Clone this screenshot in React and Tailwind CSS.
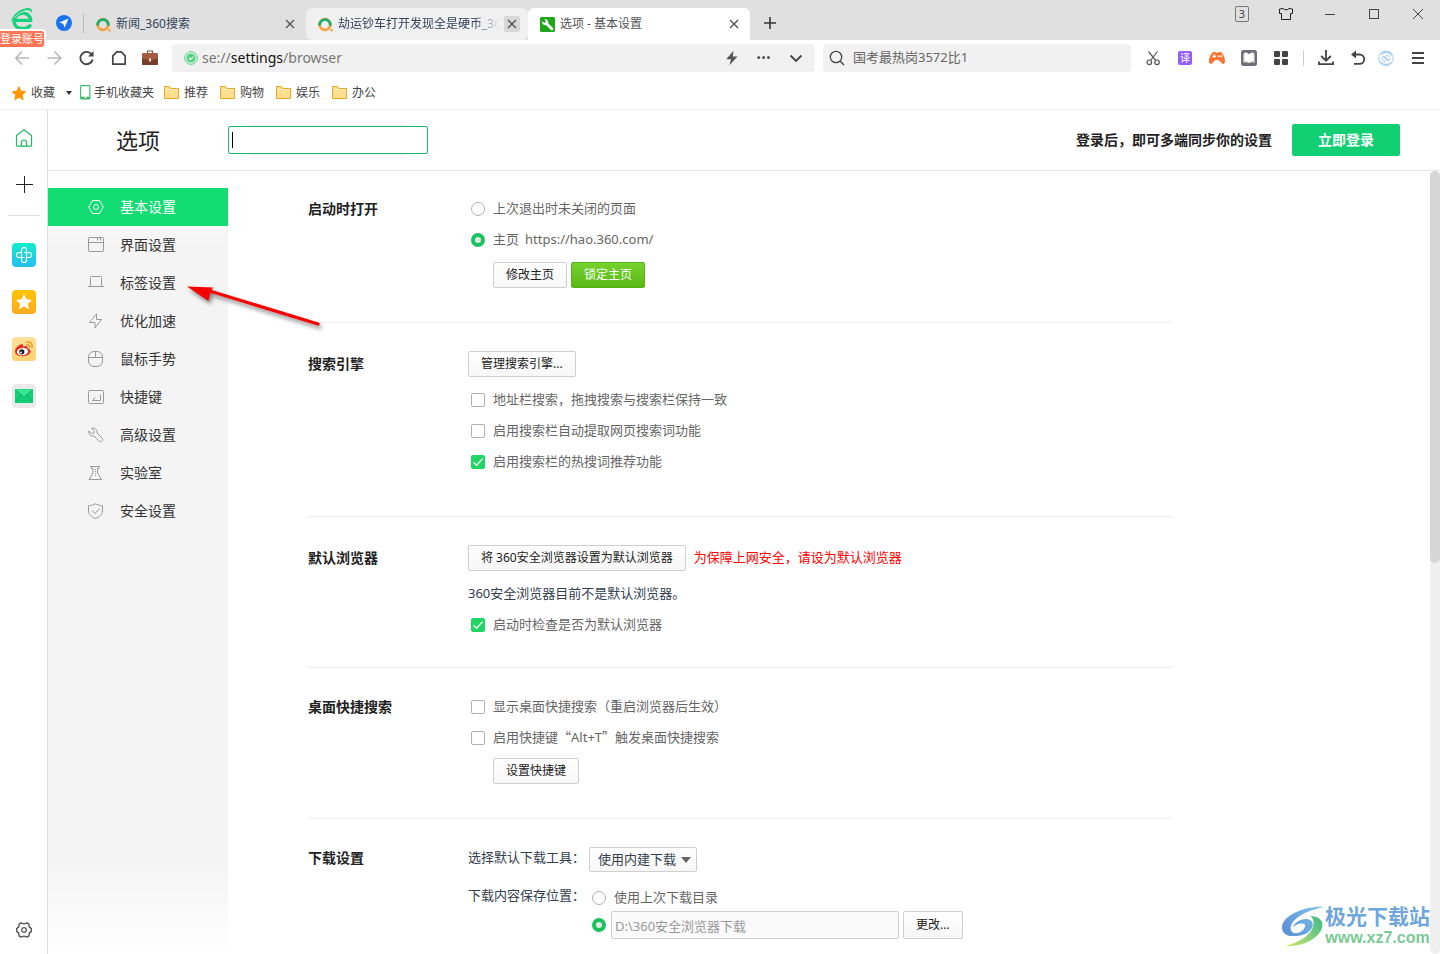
import React from "react";

/* ---------- shared pieces ---------- */

function Svg({ size = 16, label, children, className = "" }) {
  return (
    <svg
      width={size}
      height={size}
      viewBox={`0 0 ${size} ${size}`}
      fill="none"
      stroke="currentColor"
      className={`shrink-0 ${className}`}
      aria-hidden={label ? undefined : true}
      aria-label={label}
    >
      {children}
    </svg>
  );
}

function IconButton({ label, className = "", children }) {
  return (
    <button type="button" aria-label={label} className={`flex shrink-0 items-center justify-center ${className}`}>
      {children}
    </button>
  );
}

function SettingButton({ children, className = "h-[26px]" }) {
  return (
    <button
      type="button"
      className={`shrink-0 whitespace-nowrap rounded-xs border border-[#cfcfcf] bg-linear-to-b from-white to-[#f7f7f7] px-3 text-xs text-[#222] ${className}`}
    >
      {children}
    </button>
  );
}

function Check({ children, checked = false }) {
  return (
    <label className="flex h-[31px] items-center gap-2 pl-[3px] text-[13px] text-[#666]">
      <span className="grid size-3.5 shrink-0 place-items-center">
        <input
          type="checkbox"
          defaultChecked={checked}
          className="peer col-start-1 row-start-1 size-3.5 appearance-none rounded-xs border border-[#b0b0b0] bg-white checked:border-[#1fd665] checked:bg-[#1fd665]"
        />
        <svg
          viewBox="0 0 14 14"
          className="pointer-events-none col-start-1 row-start-1 hidden size-3.5 peer-checked:block"
          fill="none"
          stroke="white"
          strokeWidth="1.3"
          aria-hidden="true"
        >
          <path d="M2.5 7.2 5.6 10.2 11.6 3.6" />
        </svg>
      </span>
      <span>{children}</span>
    </label>
  );
}

function Radio({ name, checked = false, label, children, className = "h-[31px] pl-[3px]" }) {
  return (
    <label className={`flex items-center gap-2 text-[13px] text-[#666] ${className}`}>
      <input
        type="radio"
        name={name}
        defaultChecked={checked}
        aria-label={label}
        className="size-3.5 shrink-0 appearance-none rounded-full border border-[#b0b0b0] bg-white checked:border-4 checked:border-[#1bc25f] checked:bg-[#e4e8e5]"
      />
      {children}
    </label>
  );
}

function Section({ title, headClass, className, children, last = false }) {
  return (
    <section className={`flex ${last ? "" : "border-b border-[#f0f0f0]"} ${className}`}>
      <h2 className={`flex w-40 shrink-0 items-center text-sm font-bold text-[#222] ${headClass}`}>{title}</h2>
      <div className="min-w-0 flex-1">{children}</div>
    </section>
  );
}

/* ---------- browser chrome ---------- */

function BrowserLogo() {
  return (
    <svg width="24" height="24" viewBox="0 0 24 24" fill="none" aria-hidden="true" className="text-[#17d37c]">
      <path d="M5.500 13.400H20.600C20.400 8.800 17.200 6.200 12.800 6.200 7.800 6.200 4.200 9.500 4.200 14.200 4.200 18.800 8 21.600 12.600 21.600 16.400 21.600 19.200 20.300 20.800 17.700" stroke="currentColor" strokeWidth="3.400" />
      <path d="M1.200 15.500C1.700 9 8.500 2.200 16 1.200 20 .7 22.600 2 21.800 5.800 20.800 3 17.800 2.600 14.500 3.700 9 5.700 4.200 10.500 1.200 15.500Z" fill="currentColor" />
      <path d="M4.200 10.800C7.500 7 12 4 17.500 3.400" stroke="#e0e0e0" strokeWidth=".8" />
    </svg>
  );
}

function SearchFavicon() {
  return (
    <Svg size={15}>
      <circle cx="7" cy="7.500" r="5.300" stroke="#f9a03f" strokeWidth="2.800" />
      <path d="M1.700 8.500A5.300 5.300 0 1 1 12.200 8.600" stroke="#1fae6d" strokeWidth="2.800" />
      <circle cx="13.500" cy="13.200" r="1.300" fill="#f9a03f" stroke="none" />
    </Svg>
  );
}

function WrenchFavicon() {
  return (
    <Svg size={15}>
      <rect width="15" height="15" rx="1.500" fill="#1ea51a" stroke="none" />
      <path d="M6.200 6.200 12 12" stroke="white" strokeWidth="2.800" strokeLinecap="round" />
      <path d="M2.200 4.200 4.200 6 6 4.400 4.300 2.300C6.500 1.700 8.700 3.200 8.300 5.600 8 8.200 5 8.900 3.300 7.500 2.300 6.700 1.900 5.400 2.200 4.200Z" fill="white" stroke="none" />
    </Svg>
  );
}

function CloseX() {
  return (
    <Svg size={16}>
      <path d="M4 4 12 12M12 4 4 12" stroke="#555" strokeWidth="1.400" />
    </Svg>
  );
}

function Tab({ icon, title, className = "", titleClass = "text-[#33435a]", closeClass = "" }) {
  return (
    <div className={`flex h-8 w-[222px] min-w-0 items-center gap-[5px] pl-3 pr-2 ${className}`}>
      {icon}
      <span className={`min-w-0 flex-1 overflow-hidden whitespace-nowrap text-xs ${titleClass}`}>{title}</span>
      <IconButton label="关闭标签页" className={`size-4 rounded-xs ${closeClass}`}>
        <CloseX />
      </IconButton>
    </div>
  );
}

function TabBar() {
  return (
    <header className="flex h-10 items-end bg-[#e0e0e0]">
      <div className="relative flex w-[84px] shrink-0 self-start">
        <a href="#account" aria-label="登录账号" className="pl-2.5 pt-[7px]">
          <BrowserLogo />
        </a>
        <span className="absolute left-0 top-[31px] z-10 h-4 whitespace-nowrap rounded-r-xs bg-[#ff7452] text-[11px] leading-4 text-white outline-2 outline-white">
          登录账号
        </span>
        <IconButton label="导航" className="ml-[22px] mt-[15px] size-4">
          <Svg size={16}>
            <circle cx="8" cy="8" r="8" fill="#1a73ee" stroke="none" />
            <path d="M12.500 3.500 3.300 7.600 7.300 8.700 8.500 12.700Z" fill="white" stroke="none" />
          </Svg>
        </IconButton>
        <span className="ml-[11px] mt-[13px] h-5 w-px bg-[#bdbdbd]" />
      </div>
      <nav aria-label="标签页" className="flex min-w-0">
        <Tab icon={<SearchFavicon />} title="新闻_360搜索" />
        <Tab
          icon={<SearchFavicon />}
          title="劫运钞车打开发现全是硬币_36"
          className="rounded-md bg-[#f0f0f0]"
          titleClass="text-[#33435a] mask-r-from-85% mask-r-to-100%"
          closeClass="bg-[#d8d8d8]"
        />
        <Tab icon={<WrenchFavicon />} title="选项 - 基本设置" className="rounded-t-md bg-white" titleClass="text-[#555]" />
      </nav>
      <IconButton label="新建标签页" className="mb-[9px] ml-3 size-4">
        <Svg size={16}>
          <path d="M8 2V14M2 8H14" stroke="#333" strokeWidth="1.600" />
        </Svg>
      </IconButton>
      <div className="ml-auto flex shrink-0 self-start text-[#444]">
        <IconButton label="3 个标签页" className="h-7 w-11">
          <span className="h-4 w-3.5 rounded-xs border border-[#777] text-center text-[11px] leading-3.5">3</span>
        </IconButton>
        <IconButton label="皮肤" className="h-7 w-11">
          <Svg size={14}>
            <path d="M4 1.500C5 3.300 9 3.300 10 1.500L13.500 2V6.500H11.500V12.500H2.500V6.500H.5V2Z" stroke="#222" />
          </Svg>
        </IconButton>
        <IconButton label="最小化" className="h-7 w-11">
          <Svg size={10}>
            <path d="M0 5.500H10" />
          </Svg>
        </IconButton>
        <IconButton label="最大化" className="h-7 w-11">
          <Svg size={10}>
            <rect x=".5" y=".5" width="9" height="9" />
          </Svg>
        </IconButton>
        <IconButton label="关闭" className="h-7 w-11">
          <Svg size={10}>
            <path d="M0 0 10 10M10 0 0 10" />
          </Svg>
        </IconButton>
      </div>
    </header>
  );
}

function Toolbar() {
  return (
    <div className="flex h-9 items-center bg-white pl-1.5 pr-0.5 text-[#555]">
      <IconButton label="后退" className="h-7 w-8">
        <Svg><path d="M8 1.500 1.800 8 8 14.500M2 8H15" stroke="#b8b8b8" strokeWidth="1.600" /></Svg>
      </IconButton>
      <IconButton label="前进" className="h-7 w-8">
        <Svg><path d="M8.500 1.500 14.700 8 8.500 14.500M14.500 8H1.500" stroke="#b8b8b8" strokeWidth="1.600" /></Svg>
      </IconButton>
      <IconButton label="刷新" className="h-7 w-8">
        <Svg>
          <path d="M13.800 4.700A6.200 6.200 0 1 0 14.600 9.500" stroke="#444" strokeWidth="1.900" />
          <path d="M15.500 1V6.500H10Z" fill="#444" stroke="none" />
        </Svg>
      </IconButton>
      <IconButton label="主页" className="h-7 w-8">
        <Svg><path d="M2.800 5.800 6.800 1.800H11.200L15.200 5.800V14.200H2.800Z" stroke="#444" strokeWidth="1.700" strokeLinejoin="round" /></Svg>
      </IconButton>
      <IconButton label="工具箱" className="h-7 w-8">
        <Svg>
          <path d="M5.500 3.500V1H10.500V3.500" stroke="#7d5645" strokeWidth="1.200" />
          <rect x="0" y="3" width="16" height="12" rx="1.200" fill="#a15c42" stroke="none" />
          <path d="M0 8.500 8 10 16 8.500V14A1 1 0 0 1 15 15H1A1 1 0 0 1 0 14Z" fill="#74402d" stroke="none" />
          <rect x="7" y="8.500" width="2" height="3" fill="#f5e3ab" stroke="none" />
        </Svg>
      </IconButton>

      <div className="ml-1.5 flex h-7 min-w-0 flex-1 items-center rounded-sm bg-[#f1f1f1] pl-3 pr-[3px]">
        <Svg size={14} className="text-[#4cd482]">
          <circle cx="7" cy="7" r="6.300" strokeWidth="1" />
          <circle cx="7" cy="7" r="4.600" fill="currentColor" stroke="none" />
          <path d="M4.800 7 6.500 8.700 9.400 5.600" stroke="white" strokeWidth="1.200" />
        </Svg>
        <a href="#settings" className="ml-1 min-w-0 flex-1 truncate text-sm text-[#777]">
          se://<span className="text-[#111]">settings</span>/browser
        </a>
        <IconButton label="极速模式" className="h-7 w-8">
          <Svg><path d="M9.500.8 2.200 9.300H7L5.500 15.300 13.500 6.600H8.800Z" fill="#555" stroke="none" /></Svg>
        </IconButton>
        <IconButton label="更多" className="h-7 w-8">
          <Svg>
            <g fill="#555" stroke="none">
              <circle cx="2.700" cy="7.500" r="1.500" />
              <circle cx="7.600" cy="7.500" r="1.500" />
              <circle cx="12.500" cy="7.500" r="1.500" />
            </g>
          </Svg>
        </IconButton>
        <IconButton label="展开地址栏" className="h-7 w-8">
          <Svg><path d="M2.500 5.500 8 11 13.500 5.500" stroke="#444" strokeWidth="1.800" /></Svg>
        </IconButton>
      </div>

      <label className="ml-2 flex h-7 w-[308px] shrink items-center gap-2 rounded-sm bg-[#f1f1f1] pl-1.5">
        <Svg>
          <circle cx="7" cy="7" r="5.700" stroke="#444" strokeWidth="1.300" />
          <path d="M11 11 15 15" stroke="#444" strokeWidth="1.400" />
        </Svg>
        <input
          type="text"
          aria-label="搜索"
          placeholder="国考最热岗3572比1"
          className="min-w-0 flex-1 bg-transparent text-[13px] outline-none placeholder:text-[#666]"
        />
      </label>

      <div className="ml-1.5 flex shrink-0 items-center">
        <IconButton label="截图" className="h-7 w-8">
          <Svg>
            <circle cx="4.300" cy="12.300" r="2.300" strokeWidth="1.200" />
            <circle cx="12" cy="12.300" r="2.300" strokeWidth="1.200" />
            <path d="M3.500 1.500 10.800 10.500M12.500 1.500 5.500 10.500" strokeWidth="1.200" />
          </Svg>
        </IconButton>
        <IconButton label="翻译" className="h-7 w-8">
          <span className="size-3.5 rounded-xs bg-[#915ff5] text-center text-[10px] leading-3.5 text-white">译</span>
        </IconButton>
        <IconButton label="游戏" className="h-7 w-8">
          <Svg>
            <path d="M3.500 2.500C5.500 1.500 6 2.700 8 2.700S10.500 1.500 12.500 2.500C15 4.500 16.500 10 15.800 12.800 15 14.800 13 14 11.500 11.800 10.500 10.500 9.500 9.800 8 9.800S5.500 10.500 4.500 11.800C3 14 1 14.800.2 12.800-.5 10 1 4.500 3.500 2.500Z" fill="#fa7330" stroke="none" />
            <path d="M3.500 6.300H7.100M5.300 4.500V8.100" stroke="white" strokeWidth="1.300" />
            <circle cx="9.700" cy="6.300" r="1" fill="white" stroke="none" />
            <circle cx="12.400" cy="6.300" r="1" fill="white" stroke="none" />
          </Svg>
        </IconButton>
        <IconButton label="阅读" className="h-7 w-8">
          <Svg>
            <rect width="16" height="16" rx="2.500" fill="#6e6f76" stroke="none" />
            <path d="M2.300 3.500H3.500L8 4.700 12.500 3.500H13.700V12.500H9.500L8 13.300 6.500 12.500H2.300Z" fill="#d5d5d8" stroke="none" />
            <path d="M3.500 2.500C5.500 2.500 7 3.200 8 4.200 9 3.200 10.500 2.500 12.500 2.500V11C10.500 11 9 11.500 8 12.500 7 11.500 5.500 11 3.500 11Z" fill="white" stroke="none" />
          </Svg>
        </IconButton>
        <IconButton label="扩展" className="h-7 w-8">
          <Svg>
            <g fill="#444" stroke="none">
              <rect x="1" y="1" width="6" height="6" rx="1" />
              <rect x="9" y="1" width="6" height="6" rx="1" />
              <rect x="1" y="9" width="6" height="6" rx="1" />
              <rect x="9" y="9" width="6" height="6" rx="1" />
            </g>
          </Svg>
        </IconButton>
        <span className="mx-1.5 h-4 w-px bg-[#cfcfcf]" />
        <IconButton label="下载" className="h-7 w-8">
          <Svg>
            <path d="M8 0V10.500M3.200 6 8 10.700 12.800 6" stroke="#444" strokeWidth="1.800" />
            <path d="M1 11.500V14.200H15V11.500" stroke="#444" strokeWidth="1.800" />
          </Svg>
        </IconButton>
        <IconButton label="恢复标签页" className="h-7 w-8">
          <Svg>
            <path d="M3 4.500H9.500A4.700 4.700 0 0 1 9.500 13.900H4" stroke="#444" strokeWidth="1.900" />
            <path d="M1 4.500 6 .5V8.500Z" fill="#444" stroke="none" />
          </Svg>
        </IconButton>
        <IconButton label="网盘" className="h-7 w-6">
          <Svg className="text-[#a9d2f5]">
            <circle cx="8" cy="8.300" r="7.200" strokeWidth="1.100" />
            <path d="M3 4.200C6 1.300 11 1.500 14.200 5.500M1.800 11.500C5 15.300 10 15.500 13 12.500" strokeWidth="1.500" />
            <path d="M3.300 8.500 5.500 6.300 9.500 10.700M12.700 8.300 10.500 10.500 6.500 6M8 5.500 9.800 5.500 11.500 7.500M8 11.300H6.200L4.500 9.500" strokeWidth="1.100" />
          </Svg>
        </IconButton>
        <IconButton label="菜单" className="h-7 w-10">
          <Svg><path d="M2 3H14M2 8H14M2 13H14" stroke="#444" strokeWidth="1.800" /></Svg>
        </IconButton>
      </div>
    </div>
  );
}

const folders = ["推荐", "购物", "娱乐", "办公"];

function Bookmarks() {
  return (
    <nav aria-label="收藏栏" className="flex h-[34px] items-center border-b border-[#ececec] bg-white pl-[11px] text-xs text-[#444]">
      <a href="#favorites" className="flex items-center gap-1">
        <Svg>
          <path d="M8 .8 10.300 5.700 15.600 6.400 11.700 10.100 12.700 15.400 8 12.800 3.300 15.400 4.300 10.100.4 6.400 5.700 5.700Z" fill="#ff9500" stroke="none" />
        </Svg>
        收藏
      </a>
      <IconButton label="展开收藏" className="ml-2.5 h-5 w-2">
        <Svg size={8}><path d="M1 2H7L4 6Z" fill="#333" stroke="none" /></Svg>
      </IconButton>
      <a href="#phone" className="ml-[7px] flex items-center gap-[3px] whitespace-nowrap">
        <svg width="11" height="15" viewBox="0 0 11 15" fill="none" aria-hidden="true">
          <rect x=".6" y=".6" width="9.300" height="13.300" rx=".6" stroke="#3fba6e" strokeWidth="1.100" />
          <path d="M1 12.800H10" stroke="#3fba6e" strokeWidth="2.200" />
          <path d="M4.500 12.500H6.500" stroke="white" />
        </svg>
        手机收藏夹
      </a>
      <div className="ml-2.5 flex gap-3">
        {folders.map((name) => (
          <a key={name} href="#folder" className="flex items-center gap-[5px] whitespace-nowrap">
            <svg width="15" height="13" viewBox="0 0 15 13" aria-hidden="true">
              <path d="M.5.500H5.500L7 2.500H14.500V12.500H.5Z" fill="#ffdf8f" stroke="#f2a51f" />
              <path d="M1 3.500H14" stroke="#fff0c4" />
            </svg>
            {name}
          </a>
        ))}
      </div>
    </nav>
  );
}

function Rail() {
  return (
    <aside className="flex w-12 shrink-0 flex-col items-center border-r border-[#e0e0e0] bg-white pb-3 pt-4">
      <IconButton label="主页" className="size-6">
        <Svg size={18}>
          <path d="M1.500 6.500 9 .8 16.500 6.500V16.200A1 1 0 0 1 15.500 17.200H2.500A1 1 0 0 1 1.500 16.200Z" stroke="#1dbb62" strokeWidth="1.200" />
          <path d="M6.500 17V13.500A2.500 2.500 0 0 1 11.500 13.500V17" stroke="#1dbb62" strokeWidth="1.200" />
        </Svg>
      </IconButton>
      <IconButton label="添加" className="mt-[23px] size-6">
        <Svg size={18}><path d="M9.500 0V17M1 8.500H18" stroke="#222" /></Svg>
      </IconButton>
      <span className="mt-[18px] h-px w-8 bg-[#e0e0e0]" />
      <div className="mt-[27px] flex flex-col gap-[23px]">
        <IconButton label="健康" className="size-6 rounded-sm bg-linear-to-b from-[#13edc9] to-[#25bdf0]">
          <Svg size={18}>
            <path d="M11.500 6.500V4A2.500 2.500 0 0 0 6.500 4V11.500H4A2.500 2.500 0 0 1 4 6.500H6.500M9 6.500H14A2.500 2.500 0 0 1 14 11.500H11.500M11.500 6.500V14A2.500 2.500 0 0 1 6.500 14V11.500H9.500" stroke="white" strokeWidth="1.200" />
          </Svg>
        </IconButton>
        <IconButton label="收藏" className="size-6 rounded-sm bg-linear-to-b from-[#ffc400] to-[#ffab1c]">
          <Svg size={18}>
            <path d="M9 1 11.400 6.300 17 6.900 12.800 10.700 14 16.300 9 13.400 4 16.300 5.200 10.700 1 6.900 6.600 6.300Z" fill="white" stroke="none" />
          </Svg>
        </IconButton>
        <IconButton label="微博" className="size-6 rounded-sm bg-linear-to-b from-[#ffe2a0] to-[#ffd06e]">
          <svg width="20" height="20" viewBox="0 0 20 20" fill="none" aria-hidden="true">
            <path d="M1 12.500C1 9 5.500 4.700 8.300 5.200 9.500 5.500 9.200 7 9 7.700 11 6.800 13.800 6.500 13.500 9.300 15.500 9.800 16.600 10.800 16.600 12.300 16.600 15.200 12.800 17.200 8.800 17.200 4.500 17.200 1 15.500 1 12.500Z" fill="#e62b1e" />
            <ellipse cx="8.500" cy="12.600" rx="5.600" ry="3.700" fill="white" transform="rotate(-7 8.500 12.600)" />
            <circle cx="7.800" cy="12.800" r="2.600" fill="#1c1c1c" />
            <circle cx="7" cy="13.500" r=".9" fill="white" />
            <path d="M12.500 3.200C16.300 2.200 19 5 18 8.500M12.800 5.700C14.800 5.300 16.200 6.600 15.700 8.300" stroke="#f59a1b" strokeWidth="1.400" strokeLinecap="round" />
          </svg>
        </IconButton>
        <IconButton label="邮箱" className="size-6 rounded-sm bg-[#ebebeb]">
          <Svg size={18}>
            <rect y="2" width="18" height="14" rx=".8" fill="#13cf76" stroke="none" />
            <path d="M0 2.500H18L9 10Z" fill="#35e58f" stroke="none" />
            <path d="M0 2.800 9 10.200 18 2.800M0 15.500 6 8M18 15.500 12 8" stroke="#0ba75d" strokeWidth=".8" />
          </Svg>
        </IconButton>
      </div>
      <IconButton label="设置" className="mt-auto size-6">
        <Svg size={16}>
          <path d="M5 .9 8 1.900 11 .9 12.900 2.200 13.300 4.900 15.300 6.600V9.400L13.300 11.100 12.900 13.800 11 15.100 8 14.100 5 15.100 3.100 13.800 2.700 11.100.7 9.400V6.600L2.700 4.900 3.100 2.200Z" stroke="#555" strokeWidth="1.400" strokeLinejoin="round" />
          <circle cx="8" cy="8" r="2.300" stroke="#555" strokeWidth="1.300" />
        </Svg>
      </IconButton>
    </aside>
  );
}

/* ---------- settings page ---------- */

const menu = [
  { name: "基本设置", icon: <><path d="M4.500 1.500H11.500L15.300 8 11.500 14.500H4.500L.7 8Z" /><circle cx="8" cy="8" r="2.500" /></> },
  { name: "界面设置", icon: <><rect x=".5" y=".5" width="15" height="14" rx="1.500" /><path d="M.5 5.500H15.500M9.500 1V3.500M12.500 1V3.500" /></> },
  { name: "标签设置", icon: <path d="M0 11.500H16M2.500 11V2.500A1 1 0 0 1 3.500 1.500H12.500A1 1 0 0 1 13.500 2.500V11" /> },
  { name: "优化加速", icon: <path d="M8.500.8V6.500H13.500L7 15V9.500H1.500Z" strokeLinejoin="round" /> },
  { name: "鼠标手势", icon: <><rect x=".5" y=".5" width="14" height="15" rx="5.500" /><path d="M.5 6.500H14.500M7.500.5V6.500" /></> },
  { name: "快捷键", icon: <><rect x=".5" y="1.500" width="15" height="13" rx="1" /><path d="M12.500 5.500V11.500H4.500L7.500 8.500" /></> },
  { name: "高级设置", icon: <path d="M3.500 1.300 6.300 4.200 5.700 6 3.700 6.600.9 3.900C.2 7 2.800 9.800 6 9L11.300 14.200C13.300 15.800 15.800 13.300 14.200 11.300L9 6C9.800 2.800 6.600.3 3.500 1.300Z" strokeLinejoin="round" /> },
  { name: "实验室", icon: <><path d="M2 1.500H12M3.500 1.500V3.500H5V8L1 14.500H13.500L9.500 8V3.500H11V1.500" /><path d="M7.500 4V11" strokeDasharray="1 1" /></> },
  { name: "安全设置", icon: <><path d="M7.500.7C9.500 2 12 2.500 14.500 2.700V8C14.500 11.500 11.500 14.300 7.500 15.500 3.500 14.300.5 11.500.5 8V2.700C3 2.500 5.500 2 7.500.7Z" /><path d="M4 7.500 7 10.500 11.500 5.500" /></> },
];

function SideMenu() {
  return (
    <nav aria-label="设置分类" className="w-[180px] shrink-0 bg-linear-to-b from-white via-[#f4f4f4] via-10% to-[#f4f4f4]">
      <div className="flex h-full flex-col bg-linear-to-b from-transparent from-88% to-white pt-[17px]">
        {menu.map((item, i) => (
          <a
            key={item.name}
            href="#section"
            aria-current={i === 0 ? "page" : undefined}
            className={`flex h-[38px] shrink-0 items-center gap-4 pl-10 text-sm ${i === 0 ? "bg-[#12dc72] text-white" : "text-[#333]"}`}
          >
            <Svg className={i === 0 ? "text-white" : "text-[#999]"}>{item.icon}</Svg>
            {item.name}
          </a>
        ))}
      </div>
    </nav>
  );
}

function PageHeader() {
  return (
    <div className="flex h-[61px] shrink-0 items-center border-b border-[#e8e8e8] pr-10">
      <h1 className="w-[180px] shrink-0 text-center text-[22px] leading-7 text-[#222]">选项</h1>
      <div className="relative">
        <input
          type="text"
          aria-label="搜索设置"
          className="block h-7 w-[200px] rounded-xs border border-[#19b766] bg-white px-1 text-sm caret-transparent outline-none"
        />
        <span className="absolute left-1 top-1.5 h-4 w-px bg-black" />
      </div>
      <p className="ml-auto text-sm font-bold text-[#222]">登录后，即可多端同步你的设置</p>
      <button type="button" className="ml-5 h-8 w-[108px] shrink-0 rounded-xs bg-[#12cf73] text-sm font-bold text-white">
        立即登录
      </button>
    </div>
  );
}

function Sections() {
  return (
    <main className="min-w-0 max-w-[944px] flex-1 pl-20 text-[13px]">
      <Section title="启动时打开" headClass="h-[31px]" className="pb-[34px] pt-[22px]">
        <Radio name="startup">上次退出时未关闭的页面</Radio>
        <Radio name="startup" checked>
          <span className="flex gap-1.5"><span>主页</span><span>https://hao.360.com/</span></span>
        </Radio>
        <div className="mt-[7px] flex gap-1 pl-[25px]">
          <SettingButton>修改主页</SettingButton>
          <button type="button" className="h-[26px] rounded-xs border border-[#55b31a] bg-linear-to-b from-[#76d32e] to-[#58b811] px-3 text-xs text-white">
            锁定主页
          </button>
        </div>
      </Section>

      <Section title="搜索引擎" headClass="h-[26px]" className="pb-[39px] pt-7">
        <SettingButton className="mb-[7px] block h-[26px]">管理搜索引擎...</SettingButton>
        <Check>地址栏搜索，拖拽搜索与搜索栏保持一致</Check>
        <Check>启用搜索栏自动提取网页搜索词功能</Check>
        <Check checked>启用搜索栏的热搜词推荐功能</Check>
      </Section>

      <Section title="默认浏览器" headClass="h-[26px]" className="pb-[27px] pt-7">
        <div className="mb-[7px] flex items-center gap-2">
          <SettingButton>将 360安全浏览器设置为默认浏览器</SettingButton>
          <span className="whitespace-nowrap text-[#f00]">为保障上网安全，请设为默认浏览器</span>
        </div>
        <p className="flex h-[31px] items-center text-[#33404f]">360安全浏览器目前不是默认浏览器。</p>
        <Check checked>启动时检查是否为默认浏览器</Check>
      </Section>

      <Section title="桌面快捷搜索" headClass="h-[31px]" className="pb-[34px] pt-[23px]">
        <Check>显示桌面快捷搜索（重启浏览器后生效）</Check>
        <Check>
          启用快捷键<span className="font-['Noto_Sans_CJK_SC']">“</span>Alt+T<span className="font-['Noto_Sans_CJK_SC']">”</span>触发桌面快捷搜索
        </Check>
        <div className="mt-[5px] pl-[25px]">
          <SettingButton className="block h-[26px]">设置快捷键</SettingButton>
        </div>
      </Section>

      <Section title="下载设置" headClass="h-[22px]" className="pb-10 pt-7" last>
        <div className="flex gap-1 text-[#33404f]">
          <label htmlFor="tool" className="flex h-[22px] w-[117px] shrink-0 items-center">选择默认下载工具：</label>
          <div className="relative">
            <select
              id="tool"
              className="block h-[25px] appearance-none rounded-xs border border-[#cfcfcf] bg-linear-to-b from-white to-[#f7f7f7] pl-2 pr-[19px] text-[13px]"
            >
              <option>使用内建下载</option>
            </select>
            <svg width="10" height="6" viewBox="0 0 10 6" className="pointer-events-none absolute right-1.5 top-2.5" aria-hidden="true">
              <path d="M0 0H10L5 6Z" fill="#666" />
            </svg>
          </div>
        </div>
        <div className="mt-3 flex gap-[7px]">
          <span className="flex h-6 w-[117px] shrink-0 items-center text-[#33404f]">下载内容保存位置：</span>
          <div>
            <Radio name="folder" className="mt-px h-[26px]">使用上次下载目录</Radio>
            <div className="flex items-center gap-1">
              <Radio name="folder" checked label="使用指定目录" className="pr-px" />
              <input
                type="text"
                aria-label="下载目录"
                readOnly
                value="D:\360安全浏览器下载"
                className="h-7 w-72 rounded-xs border border-[#cfcfcf] bg-[#fafafa] px-[3px] text-[13px] text-[#999]"
              />
              <SettingButton className="h-7">更改...</SettingButton>
            </div>
          </div>
        </div>
      </Section>
    </main>
  );
}

function Arrow() {
  return (
    <svg width="150" height="60" viewBox="0 0 150 60" className="pointer-events-none absolute left-[138px] top-[167px] overflow-visible drop-shadow-[2px_3px_2px_rgba(0,0,0,0.5)]" aria-hidden="true">
      <path d="M22 13.500 132 47" stroke="#f80000" strokeWidth="3.200" strokeLinecap="round" />
      <path d="M1 9.500 27 10.500 24.500 14.500 22.500 24Z" fill="#f80000" />
    </svg>
  );
}

function Watermark() {
  return (
    <div className="pointer-events-none absolute bottom-1.5 right-2.5 flex items-center">
      <svg width="43" height="41" viewBox="0 0 44 42" fill="none" aria-hidden="true">
        <defs>
          <linearGradient id="sky" x1="40" y1="0" x2="4" y2="30" gradientUnits="userSpaceOnUse">
            <stop stopColor="#7fc5ee" />
            <stop offset="1" stopColor="#5a8fd6" />
          </linearGradient>
          <linearGradient id="leaf" x1="38" y1="16" x2="6" y2="40" gradientUnits="userSpaceOnUse">
            <stop stopColor="#4fbf86" />
            <stop offset="1" stopColor="#cfe56b" />
          </linearGradient>
        </defs>
        <path d="M44 1C26-1 0 9 0 22 0 30 9 33 18 29 12 29 8 26 9 21 11 12 26 4 44 1Z" fill="url(#sky)" />
        <path d="M11 22C14 14 25 11 30 15 34 19 30 26 23 29 16 32 8 31 5 27 11 29 19 28 22 24 25 20 24 18 20 18 16 18 13 20 11 22Z" fill="url(#sky)" />
        <path d="M29 10C38 11 43 15 41 22 38 33 22 42 3 41 15 38 27 32 31 23 33 18 33 14 29 10Z" fill="url(#leaf)" />
      </svg>
      <div className="flex flex-col items-center whitespace-nowrap">
        <span className="text-[21px] font-bold leading-6 text-[#6fa6dc]">极光下载站</span>
        <span className="font-['Liberation_Sans'] text-base font-bold leading-5 text-[#78cb95]">www.xz7.com</span>
      </div>
    </div>
  );
}

export default function App() {
  return (
    <div lang="zh-CN" className="flex h-screen flex-col overflow-hidden bg-white font-['Noto_Sans','Noto_Sans_CJK_SC',sans-serif]">
      <TabBar />
      <Toolbar />
      <Bookmarks />
      <div className="flex min-h-0 flex-1">
        <Rail />
        <div className="relative flex min-w-0 flex-1 flex-col">
          <PageHeader />
          <div className="flex min-h-0 flex-1">
            <SideMenu />
            <div className="min-w-0 flex-1 overflow-y-auto [scrollbar-width:none]">
              <Sections />
            </div>
            <div className="w-2.5 shrink-0 rounded-md bg-[#efefef]">
              <div className="h-1/2 rounded-md bg-[#d6d6d6]" />
            </div>
          </div>
          <Arrow />
          <Watermark />
        </div>
      </div>
    </div>
  );
}
